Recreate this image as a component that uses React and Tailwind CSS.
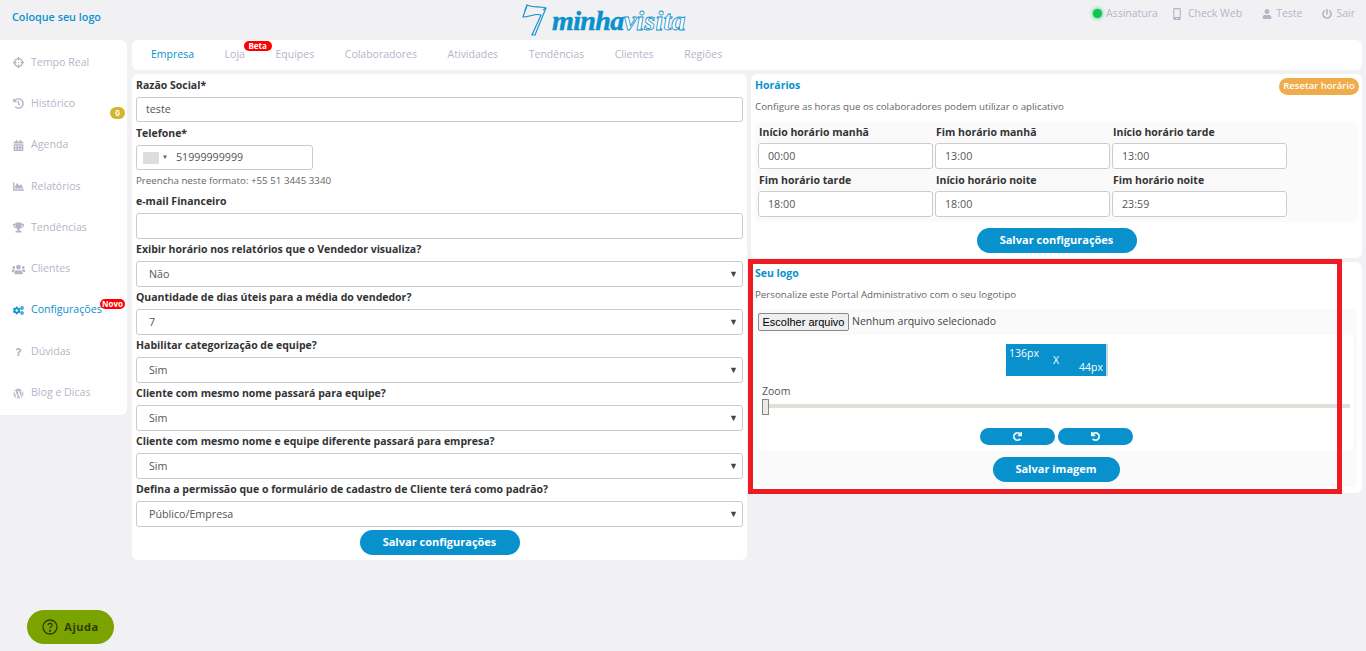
import React from 'react';
import {
  FaCalendarAlt, FaChartArea, FaCogs, FaCrosshairs, FaHistory, FaMobileAlt, FaPowerOff,
  FaQuestion, FaRedo, FaTrophy, FaUndo, FaUser, FaUsers, FaWordpress,
} from 'react-icons/fa';

const menu = [
  { label: 'Tempo Real', icon: FaCrosshairs },
  { label: 'Histórico', icon: FaHistory, count: '0' },
  { label: 'Agenda', icon: FaCalendarAlt },
  { label: 'Relatórios', icon: FaChartArea },
  { label: 'Tendências', icon: FaTrophy },
  { label: 'Clientes', icon: FaUsers },
  { label: 'Configurações', icon: FaCogs, active: true, novo: true },
  { label: 'Dúvidas', icon: FaQuestion },
  { label: 'Blog e Dicas', icon: FaWordpress },
];

const tabs = ['Empresa', 'Loja', 'Equipes', 'Colaboradores', 'Atividades', 'Tendências', 'Clientes', 'Regiões'];

const selects = [
  ['Exibir horário nos relatórios que o Vendedor visualiza?', 'Não'],
  ['Quantidade de dias úteis para a média do vendedor?', '7'],
  ['Habilitar categorização de equipe?', 'Sim'],
  ['Cliente com mesmo nome passará para equipe?', 'Sim'],
  ['Cliente com mesmo nome e equipe diferente passará para empresa?', 'Sim'],
  ['Defina a permissão que o formulário de cadastro de Cliente terá como padrão?', 'Público/Empresa'],
];

const hours = [
  ['Início horário manhã', '00:00'],
  ['Fim horário manhã', '13:00'],
  ['Início horário tarde', '13:00'],
  ['Fim horário tarde', '18:00'],
  ['Início horário noite', '18:00'],
  ['Fim horário noite', '23:59'],
];

function Label({ children, className = 'h-[22px]' }) {
  return <div className={`flex items-center text-[10.5px] font-bold text-[#333] whitespace-nowrap ${className}`}>{children}</div>;
}

function SaveButton({ children, width = 'w-40' }) {
  return (
    <button className={`h-[25px] ${width} rounded-full bg-[#0891cc] text-[11px] font-bold text-white`}>{children}</button>
  );
}

function Logo() {
  return (
    <div className="flex h-10 w-[166px] items-center pt-[2px]">
      <svg width="31" height="36" viewBox="0 0 31 36" fill="none" stroke="#0891cc" strokeWidth="1.1" className="shrink-0">
        <path d="M1 14 L5 2 C11 5 18 3 24 5 L13 32 L10 32 L19 12 C14 10 7 14 1 14 Z" />
        <path d="M5 2 L3 8 M21 7 L24 5" />
      </svg>
      <span className="-ml-[1px] font-['Liberation_Serif',serif] text-[28px] font-bold italic leading-none tracking-[-0.6px] text-[#0891cc] [-webkit-text-stroke:0.5px_#0891cc]">minha</span>
      <span className="font-['Liberation_Serif',serif] text-[28px] font-bold italic leading-none tracking-[0.2px] text-white [-webkit-text-stroke:0.8px_#0891cc]">visita</span>
    </div>
  );
}

function Header() {
  return (
    <header className="flex h-10 items-center pl-3 pr-[11px] text-[10.5px] text-[#b3b6c6]">
      <div className="w-[510px] pb-[6px] text-[10.8px] font-semibold text-[#0891cc]">Coloque seu logo</div>
      <Logo />
      <div className="ml-auto flex items-center pb-[13px]">
        <span className="mr-[4px] h-[9px] w-[9px] rounded-full bg-[#0cc654] shadow-[0_0_4px_#0cc654]" />
        <span>Assinatura</span>
        <FaMobileAlt className="ml-[13px] mr-[5px] text-[12px]" />
        <span>Check Web</span>
        <FaUser className="ml-5 mr-[4px] text-[10px]" />
        <span>Teste</span>
        <FaPowerOff className="ml-5 mr-[4px] text-[10px]" />
        <span>Sair</span>
      </div>
    </header>
  );
}

function Sidebar() {
  return (
    <nav className="flex h-[375px] w-[127px] shrink-0 flex-col rounded-r-md bg-white pt-[2px] text-[10.6px] text-[#b3b6c6]">
      {menu.map(({ label, icon: Icon, count, active, novo }) => (
        <div key={label} className={`relative flex h-[41.3px] items-center pl-[13px] ${active ? 'text-[#0891cc]' : ''}`}>
          <Icon className={`w-[11px] shrink-0 ${label === 'Dúvidas' ? 'text-[8px]' : 'text-[11px]'} ${label === 'Clientes' ? 'scale-125' : ''}`} />
          <span className="ml-[7px] whitespace-nowrap">{label}</span>
          {count && (
            <span className="absolute left-[110px] top-[24px] flex h-[12px] w-[15px] items-center justify-center rounded-full bg-[#d4b52b] text-[8px] font-bold text-white">{count}</span>
          )}
          {novo && (
            <span className="absolute left-[100px] top-[9px] flex h-[10px] w-[25px] items-center justify-center rounded-full bg-[#f00] text-[8px] font-bold text-white">Novo</span>
          )}
        </div>
      ))}
    </nav>
  );
}

function Tabs() {
  return (
    <div className="flex h-[30px] items-center gap-[30.6px] rounded-md bg-white pl-[19px] text-[10.5px] text-[#b3b6c6]">
      {tabs.map((t, i) => (
        <span key={t} className={`relative ${i === 0 ? 'text-[#0891cc]' : ''}`}>
          {t}
          {t === 'Loja' && (
            <span className="absolute left-[19px] top-[-6px] flex h-[10px] w-[28px] items-center justify-center rounded-full bg-[#f00] text-[8px] font-bold text-white">Beta</span>
          )}
        </span>
      ))}
    </div>
  );
}

function TextField({ value, height = 'h-[26px]' }) {
  return (
    <div className={`flex ${height} items-center rounded-[3px] border border-[#ccc] bg-white px-[9px] text-[10.7px] text-[#555]`}>{value}</div>
  );
}

function Select({ value }) {
  return (
    <div className="flex h-[26px] items-center justify-between rounded-[3px] border border-[#ccc] bg-white pl-3 pr-[4px] text-[10.7px] text-[#555]">
      <span>{value}</span>
      <span className="text-[9px] text-[#444]">▼</span>
    </div>
  );
}

function CompanyForm() {
  return (
    <section className="h-[486px] w-[615px] shrink-0 rounded-md bg-white px-1">
      <Label className="h-[23px]">Razão Social*</Label>
      <TextField value="teste" height="h-[25px]" />
      <Label className="h-[23px]">Telefone*</Label>
      <div className="flex h-[25px] w-[177px] items-center rounded-[3px] border border-[#ccc] bg-white pl-[6px] text-[10.7px] text-[#555]">
        <span className="h-3 w-4 bg-[#ddd]" />
        <span className="ml-[3px] text-[6px] text-[#555]">▼</span>
        <span className="ml-[8px]">51999999999</span>
      </div>
      <div className="flex h-[21px] items-center pt-px text-[9.75px] text-[#666]">Preencha neste formato: +55 51 3445 3340</div>
      <Label>e-mail Financeiro</Label>
      <TextField value="" />
      {selects.map(([label, value]) => (
        <div key={label}>
          <Label>{label}</Label>
          <Select value={value} />
        </div>
      ))}
      <div className="mt-[3px] flex justify-center">
        <SaveButton>Salvar configurações</SaveButton>
      </div>
    </section>
  );
}

function Schedule() {
  return (
    <section className="relative h-[184px] rounded-md bg-white px-1 pt-px">
      <h2 className="flex h-[22px] items-center text-[10.5px] font-bold text-[#0891cc]">Horários</h2>
      <p className="flex h-[21px] items-center text-[9.75px] text-[#666]">Configure as horas que os colaboradores podem utilizar o aplicativo</p>
      <button className="absolute right-[3px] top-1 h-[17px] w-20 rounded-full bg-[#f0ab4a] text-[9.5px] font-semibold text-white">Resetar horário</button>
      <div className="mt-1 rounded-md bg-[#fafafa] px-[3px] pb-[5px]">
        <div className="grid grid-cols-[175px_175px_175px] gap-x-[2px] gap-y-px">
          {hours.map(([label, value]) => (
            <div key={label}>
              <Label className="h-[21px] pl-px">{label}</Label>
              <TextField value={value} />
            </div>
          ))}
        </div>
      </div>
      <div className="mt-[6px] flex justify-center">
        <SaveButton>Salvar configurações</SaveButton>
      </div>
    </section>
  );
}

function LogoUpload() {
  return (
    <section className="relative h-[231px] rounded-md bg-white px-1 pt-px">
      <h2 className="flex h-[22px] items-center text-[10.5px] font-bold text-[#0891cc]">Seu logo</h2>
      <p className="flex h-[21px] items-center text-[9.75px] text-[#666]">Personalize este Portal Administrativo com o seu logotipo</p>
      <div className="mr-px mt-[3px] h-[178px] rounded-md bg-[#fafafa] px-[3px] pt-1">
        <div className="flex h-[18px] items-center">
          <button className="h-[18px] w-[91px] whitespace-nowrap rounded-[2px] border border-[#8a8a8a] bg-[#efefef] font-['Liberation_Sans',sans-serif] text-[11px] text-black">Escolher arquivo</button>
          <span className="ml-[3px] text-[10.5px] text-[#444]">Nenhum arquivo selecionado</span>
        </div>
        <div className="mt-[4px] h-[116px] rounded-md bg-white pt-[9px]">
          <div className="ml-[248px] h-8 w-[102px] border-r-2 border-[#c5d9e3] bg-[#0891cc] px-[3px] pt-[6px] text-[10.5px] leading-[7px] text-white">
            <div>136px</div>
            <div className="text-center">X</div>
            <div className="text-right">44px</div>
          </div>
          <div className="ml-1 mt-[9px] text-[10.5px] leading-[12px] text-[#555]">Zoom</div>
          <div className="relative ml-1 mr-1 mt-[7px] h-[4px] bg-[#e2ded8]">
            <span className="absolute -top-[5px] left-0 h-4 w-[7px] border border-[#888] bg-[#eeeae6]" />
          </div>
          <div className="mt-[20px] flex justify-center gap-[3px]">
            <button className="flex h-[17px] w-[75px] items-center justify-center rounded-full bg-[#0891cc] text-[9px] text-white"><FaRedo strokeWidth={30} /></button>
            <button className="flex h-[17px] w-[75px] items-center justify-center rounded-full bg-[#0891cc] text-[9px] text-white"><FaUndo strokeWidth={30} /></button>
          </div>
        </div>
        <div className="mt-[6px] flex justify-center">
          <SaveButton width="w-[127px]">Salvar imagem</SaveButton>
        </div>
      </div>
    </section>
  );
}

export default function App() {
  return (
    <div className="relative h-[651px] overflow-hidden bg-[#f1f1f4] font-['Open_Sans',sans-serif]">
      <Header />
      <div className="flex gap-[5px] pr-1">
        <Sidebar />
        <main className="flex min-w-0 flex-1 flex-col gap-1">
          <Tabs />
          <div className="flex gap-1">
            <CompanyForm />
            <div className="flex min-w-0 flex-1 flex-col gap-1">
              <Schedule />
              <LogoUpload />
            </div>
          </div>
        </main>
      </div>
      {/* anotacao vermelha por cima do cartao do logo */}
      <div className="pointer-events-none absolute left-[748px] top-[259px] h-[235px] w-[594px] border-[5px] border-[#ed1c24]" />
      <button className="absolute left-[27px] top-[610px] flex h-[34px] w-[87px] items-center justify-center gap-[6px] rounded-full bg-[#7aa300] text-[11px] font-bold tracking-[0.5px] text-[#2f3d05]">
        <svg width="16" height="16" viewBox="0 0 16 16" fill="none" stroke="currentColor" strokeWidth="1.3">
          <circle cx="8" cy="8" r="7" />
          <path d="M6 6.3a2 2 0 1 1 3 1.7c-.7.4-1 .8-1 1.6" />
          <circle cx="8" cy="11.8" r=".5" fill="currentColor" />
        </svg>
        Ajuda
      </button>
    </div>
  );
}
